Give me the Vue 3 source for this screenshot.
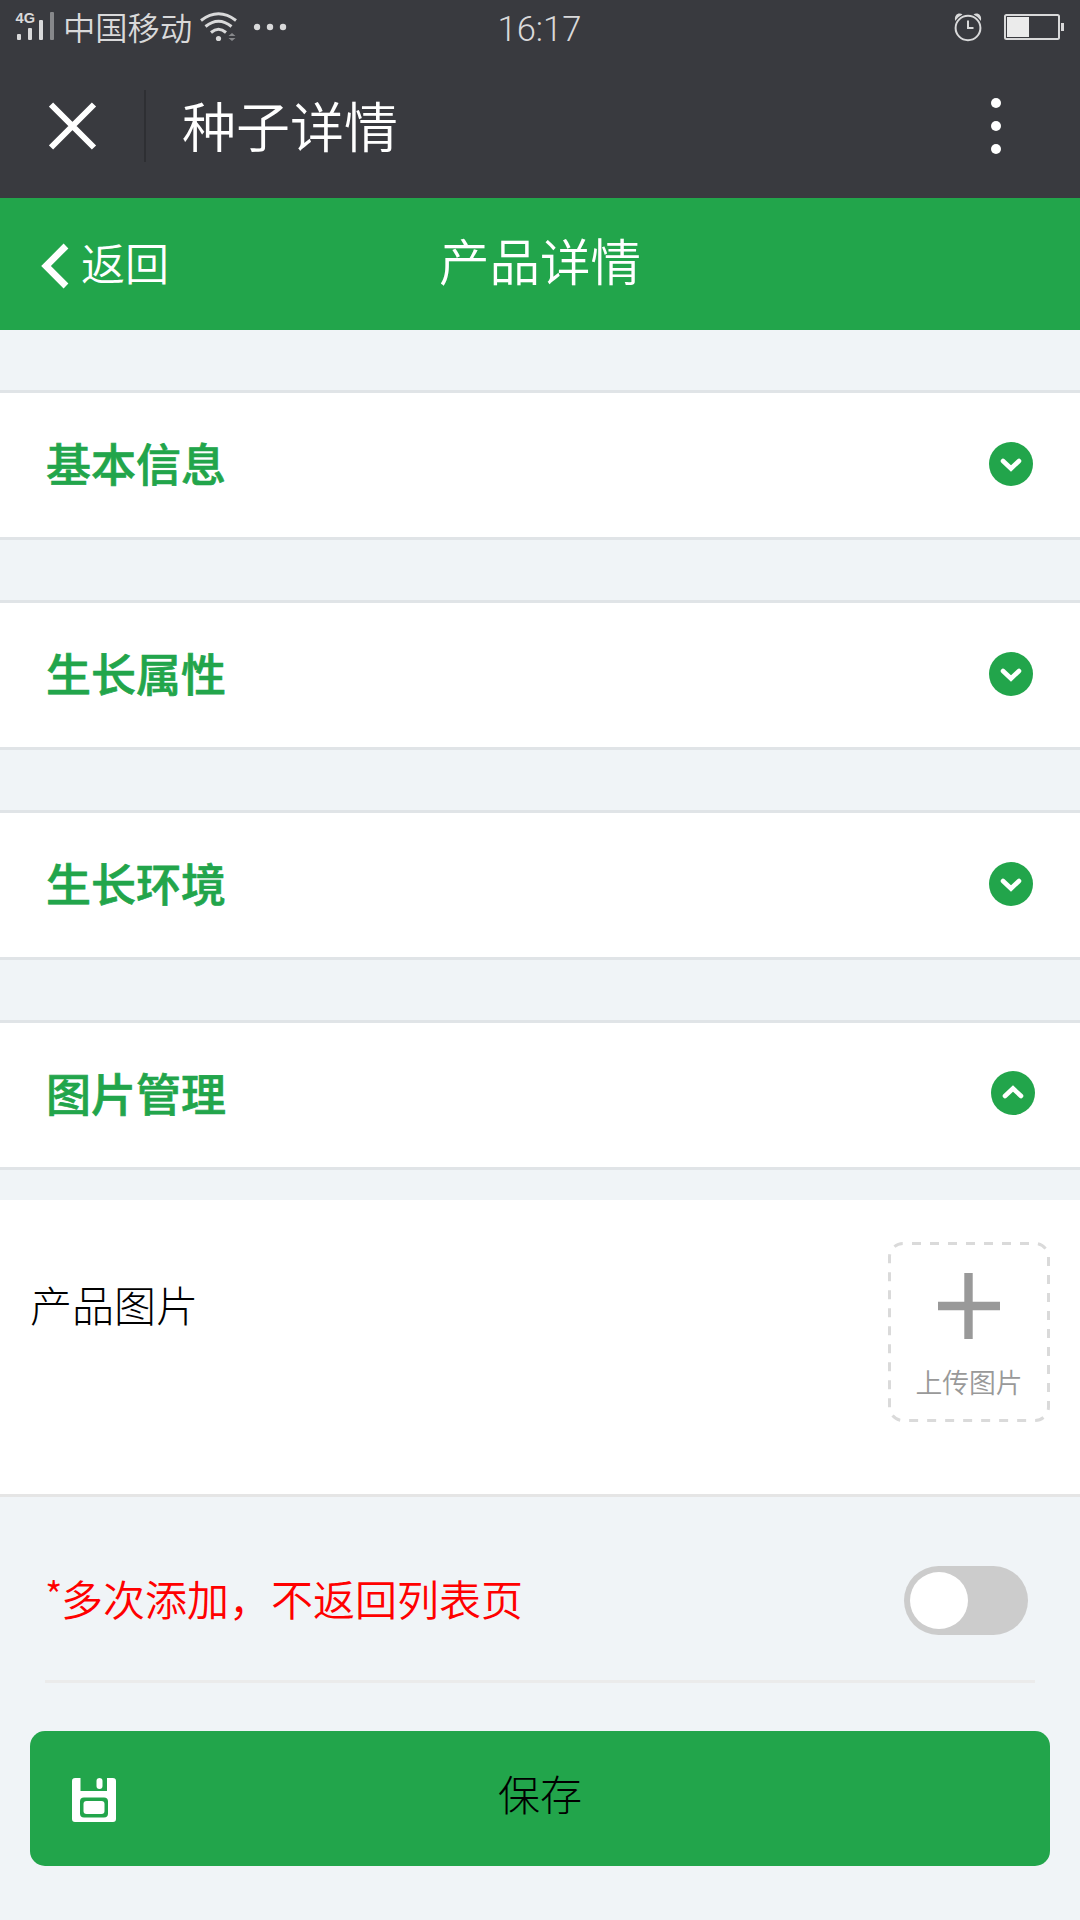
<template>
  <div class="page">
    <div class="status-bar">
      <div class="status-left">
        <svg class="signal" width="40" height="32" viewBox="0 0 40 32">
          <text x="0.500" y="14" class="signal-label" textLength="19.500" lengthAdjust="spacingAndGlyphs">4G</text>
          <rect x="2" y="25" width="4" height="6" rx="1" fill="#d9d9da" />
          <rect x="13" y="19" width="4" height="12" rx="1" fill="#d9d9da" />
          <rect x="24" y="11" width="4" height="20" rx="1" fill="#d9d9da" />
          <rect x="35" y="3" width="4" height="28" rx="1" fill="#87888b" />
        </svg>
        <span class="carrier">中国移动</span>
        <svg class="wifi" width="38" height="30" viewBox="0 0 38 30">
          <g fill="none" stroke="#d9d9da" stroke-width="3">
            <path d="M1 8.500Q18.500 -5 36 8.500" />
            <path d="M5.500 14.500Q18.500 4 31.500 14.500" />
            <path d="M11 20.500Q18.500 14 26 20.500" />
          </g>
          <circle cx="18.500" cy="26.500" r="2.600" fill="#d9d9da" />
          <path d="M28.500 24h7L32 21zM28.500 26h7L32 29z" fill="#87888b" />
        </svg>
        <svg class="more" width="34" height="8" viewBox="0 0 34 8">
          <circle v-for="x in [4, 17, 30]" :key="x" :cx="x" cy="4" r="3.2" fill="#d9d9da" />
        </svg>
      </div>
      <span class="clock">16:17</span>
      <div class="status-right">
        <svg width="28" height="30" viewBox="0 0 28 30">
          <ellipse cx="14" cy="16" rx="12.400" ry="12.200" fill="none" stroke="#d9d9da" stroke-width="2" />
          <path d="M1 9Q0 3 4.500 1.500Q7 1 8.500 2.500Q4 4.500 1 9zM27 9Q28 3 23.500 1.500Q21 1 19.500 2.500Q24 4.500 27 9z" fill="#d9d9da" />
          <path d="M14 8.500V16H19.500" fill="none" stroke="#d9d9da" stroke-width="2" />
        </svg>
        <svg width="60" height="26" viewBox="0 0 60 26">
          <rect x="1" y="1" width="54" height="24" rx="1.500" fill="none" stroke="#d9d9da" stroke-width="2" />
          <rect x="3" y="3" width="22" height="20" fill="#ebebeb" />
          <rect x="57" y="9" width="3" height="8" fill="#d9d9da" />
        </svg>
      </div>
    </div>

    <div class="app-bar">
      <svg class="close" width="48" height="48" viewBox="0 0 48 48">
        <path d="M2 2.500L45 45.500M45 2.500L2 45.500" stroke="#fff" stroke-width="6" />
      </svg>
      <div class="divider"></div>
      <span class="app-title">种子详情</span>
      <svg class="menu" width="12" height="58" viewBox="0 0 12 58">
        <circle v-for="y in [6, 29, 52]" :key="y" cx="6" :cy="y" r="5" fill="#fff" />
      </svg>
    </div>

    <header class="nav">
      <div class="back">
        <svg width="28" height="46" viewBox="0 0 28 46">
          <path d="M25 3L5 23L25 43" fill="none" stroke="#fff" stroke-width="6.800" />
        </svg>
        <span>返回</span>
      </div>
      <h1>产品详情</h1>
    </header>

    <section v-for="item in sections" :key="item.title" class="panel">
      <h2>{{ item.title }}</h2>
      <svg class="toggle-icon" :class="{ open: item.open }" width="46" height="46" viewBox="0 0 46 46">
        <circle cx="23" cy="23" r="22" fill="#22a54b" />
        <path :d="item.open ? 'M15 26L23 18.500L31 26' : 'M15 20L23 27.500L31 20'" />
      </svg>
    </section>

    <div class="pictures">
      <span class="pictures-label">产品图片</span>
      <div class="upload">
        <svg class="upload-frame" width="162" height="180" viewBox="0 0 162 180">
          <rect x="1.500" y="1.500" width="159" height="177" rx="13.500" />
        </svg>
        <svg class="plus" width="62" height="66" viewBox="0 0 62 66">
          <path d="M0 33H62M30.500 0V66" stroke="#999" stroke-width="8.400" />
        </svg>
        <span>上传图片</span>
      </div>
    </div>

    <div class="repeat">
      <p><span class="star">*</span>多次添加，不返回列表页</p>
      <div class="switch" :class="{ on: repeat }" @click="repeat = !repeat">
        <div class="knob"></div>
      </div>
    </div>

    <button class="save" type="button">
      <svg width="44" height="45" viewBox="0 0 44 45">
        <path
          fill="#fff"
          fill-rule="evenodd"
          d="M3 0H8.500V13H35V0H41Q44 0 44 3V41Q44 44 41 44H3Q0 44 0 41V3Q0 0 3 0zM12 19.500Q8 19.500 8 23.500V35.500Q8 39.500 12 39.500H32Q36 39.500 36 35.500V23.500Q36 19.500 32 19.500z"
        />
        <rect x="11.500" y="23" width="21" height="13" rx="3" fill="#fff" />
        <rect x="24.500" y="0" width="6" height="11" rx="3" fill="#fff" />
      </svg>
      <span>保存</span>
    </button>
  </div>
</template>

<script setup>
import { ref } from 'vue';

const sections = ref([
  { title: '基本信息', open: false },
  { title: '生长属性', open: false },
  { title: '生长环境', open: false },
  { title: '图片管理', open: true }
]);

const repeat = ref(false);
</script>

<style>
body {
  margin: 0;
  background: #f0f4f7;
}
</style>

<style scoped>
.page {
  width: 1080px;
  height: 1920px;
  overflow: hidden;
  background: #f0f4f7;
  font-family: 'Noto Sans CJK SC', sans-serif;
  font-weight: 300;
}

svg {
  display: block;
  flex: none;
}

h1,
h2,
p {
  margin: 0;
}

.status-bar {
  box-sizing: border-box;
  height: 54px;
  padding: 0 16px 0 15px;
  display: grid;
  grid-template-columns: 1fr auto 1fr;
  align-items: center;
  background: #393a3f;
  color: #d9d9da;
}

.status-left,
.status-right {
  display: flex;
  align-items: center;
}

.signal {
  margin-bottom: 4px;
}

.signal-label {
  font: bold 15px 'Liberation Sans', sans-serif;
  fill: #d9d9da;
}

.carrier {
  margin-left: 8px;
  padding-bottom: 2px;
  font-size: 32.3px;
  font-weight: 350;
  line-height: 52px;
}

.wifi {
  margin-left: 8px;
}

.more {
  margin-left: 15px;
}

.clock {
  padding-top: 4px;
  font: 300 34.5px/50px Roboto, sans-serif;
}

.status-right {
  justify-content: flex-end;
  gap: 22px;
}

.app-bar {
  box-sizing: border-box;
  height: 144px;
  padding: 0 78px 0 49px;
  display: flex;
  align-items: center;
  background: #393a3f;
  color: #fff;
}

.divider {
  width: 2px;
  height: 72px;
  margin-left: 47px;
  background: #2e2f33;
}

.app-title {
  margin-left: 36px;
  padding-bottom: 3px;
  font-size: 54px;
  font-weight: 350;
  line-height: 80px;
}

.menu {
  margin-left: auto;
}

.nav {
  height: 132px;
  padding: 0 41px;
  display: grid;
  grid-template-columns: 1fr auto 1fr;
  align-items: center;
  background: #22a54b;
  color: #fff;
}

.back {
  display: flex;
  align-items: center;
  gap: 12px;
  font-size: 44px;
  font-weight: 350;
  line-height: 60px;
}

.back svg {
  margin-top: 3px;
}

.back span {
  padding-bottom: 5px;
}

.nav h1 {
  padding-bottom: 11px;
  font-size: 50.500px;
  font-weight: 350;
  line-height: 72px;
}

.panel {
  box-sizing: border-box;
  height: 150px;
  margin-top: 60px;
  padding: 0 46px 2px;
  display: flex;
  align-items: center;
  justify-content: space-between;
  border-top: 3px solid #e0e4e7;
  border-bottom: 3px solid #e0e4e7;
  background: #fff;
}

.panel h2 {
  padding-bottom: 3px;
  color: #22a54b;
  font-size: 45px;
  font-weight: 500;
  line-height: 60px;
  -webkit-text-stroke: 0.7px #22a54b;
}

.toggle-icon path {
  fill: none;
  stroke: #fff;
  stroke-width: 4.6;
  stroke-linecap: round;
}

.toggle-icon.open {
  margin: 0 -2px 2px 0;
}

.pictures {
  box-sizing: border-box;
  height: 297px;
  margin-top: 30px;
  padding: 42px 30px 0;
  display: flex;
  justify-content: space-between;
  border-bottom: 3px solid #e5e5e5;
  background: #fff;
}

.pictures-label {
  margin-top: 32px;
  font-size: 42px;
  line-height: 60px;
  height: 60px;
  color: #000;
}

.upload {
  position: relative;
  box-sizing: border-box;
  width: 162px;
  height: 180px;
  padding-top: 31px;
  display: flex;
  flex-direction: column;
  align-items: center;
  color: #999;
  font-size: 26.800px;
  font-weight: 350;
  line-height: 36px;
}

.upload-frame {
  position: absolute;
  inset: 0;
}

.upload-frame rect {
  fill: none;
  stroke: #dadada;
  stroke-width: 3;
  stroke-dasharray: 9 9;
  stroke-dashoffset: 9;
}

.upload span {
  margin-top: 25px;
}

.repeat {
  box-sizing: border-box;
  height: 186px;
  margin: 0 45px;
  padding: 0 7px 0 0;
  display: flex;
  align-items: center;
  justify-content: space-between;
  border-bottom: 3px solid #ebebeb;
}

.repeat p {
  padding-top: 18px;
  display: flex;
  align-items: center;
  color: #f00;
  font-size: 42px;
  font-weight: 350;
  line-height: 60px;
}

.star {
  width: 16px;
  height: 60px;
  font-size: 38px;
  line-height: 52px;
}

.switch {
  box-sizing: border-box;
  width: 124px;
  height: 69px;
  margin-top: 24px;
  padding: 6px;
  border-radius: 35px;
  background: #ccc;
}

.switch.on {
  background: #22a54b;
}

.knob {
  width: 58px;
  height: 57px;
  border-radius: 50%;
  background: #fff;
}

.on .knob {
  margin-left: auto;
}

.save {
  box-sizing: border-box;
  width: 1020px;
  height: 135px;
  margin: 48px 30px 0;
  padding: 0 42px;
  display: grid;
  grid-template-columns: 1fr auto 1fr;
  align-items: center;
  border: 0;
  border-radius: 15px;
  background: #22a54b;
  color: #000;
  font-family: inherit;
  font-size: 42px;
  font-weight: 300;
  line-height: 60px;
}

.save svg {
  margin-top: 3px;
}

.save span {
  padding-bottom: 11px;
}
</style>
